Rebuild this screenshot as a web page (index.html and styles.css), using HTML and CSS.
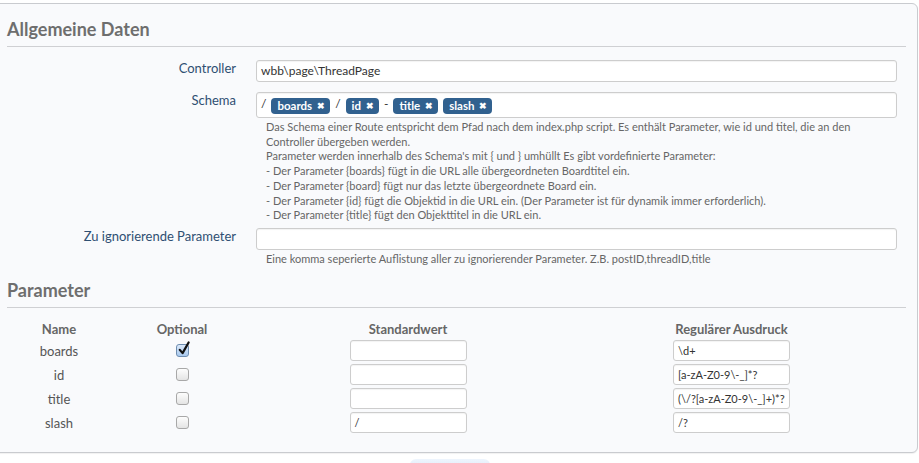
FILE: index.html
```html
<!DOCTYPE html>
<html lang="de">
<head>
<meta charset="utf-8">
<title>Route</title>
<link rel="stylesheet" href="styles.css">
</head>
<body>
<div class="box">
  <h2 class="section-title">Allgemeine Daten</h2>
  <div class="form-row first">
    <label class="form-label">Controller</label>
    <div class="form-field">
      <div class="input">wbb\page\ThreadPage</div>
    </div>
  </div>
  <div class="form-row">
    <label class="form-label">Schema</label>
    <div class="form-field">
      <div class="input schema">
        <span class="sep">/</span>
        <span class="pill">boards <span class="x">✖</span></span>
        <span class="sep">/</span>
        <span class="pill">id <span class="x">✖</span></span>
        <span class="sep">-</span>
        <span class="pill">title <span class="x">✖</span></span>
        <span class="pill">slash <span class="x">✖</span></span>
      </div>
      <p class="help">Das Schema einer Route entspricht dem Pfad nach dem index.php script. Es enthält Parameter, wie id und titel, die an den Controller übergeben werden.<br>Parameter werden innerhalb des Schema's mit { und } umhüllt Es gibt vordefinierte Parameter:<br>- Der Parameter {boards} fügt in die URL alle übergeordneten Boardtitel ein.<br>- Der Parameter {board} fügt nur das letzte übergeordnete Board ein.<br>- Der Parameter {id} fügt die Objektid in die URL ein. (Der Parameter ist für dynamik immer erforderlich).<br>- Der Parameter {title} fügt den Objekttitel in die URL ein.</p>
    </div>
  </div>
  <div class="form-row after-help">
    <label class="form-label">Zu ignorierende Parameter</label>
    <div class="form-field">
      <div class="input"></div>
      <p class="help tight">Eine komma seperierte Auflistung aller zu ignorierender Parameter. Z.B. postID,threadID,title</p>
    </div>
  </div>

  <h2 class="section-title second">Parameter</h2>
  <div class="params">
    <div class="th">Name</div>
    <div class="th">Optional</div>
    <div class="th">Standardwert</div>
    <div class="th">Regulärer Ausdruck</div>

    <div class="td">boards</div>
    <div class="td"><span class="check checked"><svg viewBox="0 0 14 16" width="13" height="15"><path d="M3 9.5 L6 13 L12.5 1.5" fill="none" stroke="#111" stroke-width="2.4" stroke-linecap="round" stroke-linejoin="round"/></svg></span></div>
    <div class="td"><div class="input small"></div></div>
    <div class="td"><div class="input small">\d+</div></div>

    <div class="td">id</div>
    <div class="td"><span class="check"></span></div>
    <div class="td"><div class="input small"></div></div>
    <div class="td"><div class="input small">[a-zA-Z0-9\-_]*?</div></div>

    <div class="td">title</div>
    <div class="td"><span class="check"></span></div>
    <div class="td"><div class="input small"></div></div>
    <div class="td"><div class="input small">(\/?[a-zA-Z0-9\-_]+)*?</div></div>

    <div class="td">slash</div>
    <div class="td"><span class="check"></span></div>
    <div class="td"><div class="input small">/</div></div>
    <div class="td"><div class="input small">/?</div></div>
  </div>
</div>
<div class="footer"><span class="button"></span></div>
</body>
</html>
```
FILE: styles.css
```css
html, body {
  margin: 0;
  padding: 0;
  background: #ffffff;
}
body {
  font-family: "Lato", "Open Sans", sans-serif;
  font-size: 12px;
  color: #555;
  overflow: hidden;
  height: 463px;
}
.box {
  margin: 3px 1px 0 -10px;
  border: 1px solid #c9cbcf;
  border-radius: 6px;
  background: #f9fafc;
  padding: 0 11px 0 16px;
  height: 450px;
  box-sizing: border-box;
  box-shadow: 0 1px 1px rgba(0,0,0,0.06);
}
.section-title {
  margin: 0;
  padding: 14px 0 6px;
  font-size: 18px;
  font-weight: bold;
  color: #6e6e6e;
  border-bottom: 1px solid #cfd0d3;
  line-height: 22px;
}
.section-title.second {
  margin-top: 12px;
  padding-top: 0;
}
.form-row {
  display: grid;
  grid-template-columns: 229px 1fr;
  column-gap: 20px;
  padding-right: 9px;
  margin-top: 10px;
}
.form-row.first { margin-top: 13px; }
.form-row.after-help { margin-top: 5px; }
.form-label {
  text-align: right;
  color: #2f4f72;
  font-size: 13px;
  line-height: 16px;
}
.input {
  height: 22px;
  box-sizing: border-box;
  background: #fff;
  border: 1px solid #cdcdcd;
  border-radius: 3px;
  padding: 0 4px;
  font-size: 12px;
  line-height: 20px;
  color: #333;
  box-shadow: inset 0 1px 1px rgba(0,0,0,0.05);
  white-space: nowrap;
  overflow: hidden;
}
.input.schema {
  height: 26px;
  display: flex;
  align-items: center;
  gap: 5px;
  padding: 0 4px;
}
.sep {
  color: #333;
  font-size: 12px;
  margin-top: -3px;
}
.pill {
  display: inline-flex;
  align-items: center;
  gap: 5px;
  background: #31618f;
  color: #fff;
  font-weight: bold;
  font-size: 11.5px;
  height: 16px;
  line-height: 16px;
  padding: 0 5px 0 6px;
  border-radius: 4px;
  margin-top: 2px;
}
.pill .x {
  font-size: 9px;
}
.help {
  margin: 2px 0 0;
  padding-left: 10px;
  font-size: 11px;
  line-height: 14.7px;
  color: #666;
}
.help.tight {
  margin-top: 2px;
}
.params {
  display: grid;
  grid-template-columns: 104px 142px 310px 1fr;
  grid-template-rows: 19px repeat(4, 24px);
  padding-right: 6px;
  margin-top: 12px;
  align-items: center;
  justify-items: center;
}
.th {
  font-weight: bold;
  color: #666;
  font-size: 13px;
  line-height: 18px;
}
.td {
  font-size: 13px;
  color: #555;
  line-height: 18px;
}
.input.small {
  width: 117px;
  height: 21px;
  font-size: 11px;
}
.check {
  display: block;
  width: 11px;
  height: 11px;
  border: 1px solid #a8a8a8;
  border-radius: 3px;
  background: linear-gradient(#fdfdfd, #e4e4e4);
  position: relative;
}
.check.checked {
  background: linear-gradient(#dbe9fa, #a9c9ee);
  border-color: #6e8db0;
}
.check svg {
  position: absolute;
  left: 0;
  top: -4px;
}
.footer {
  display: flex;
  justify-content: center;
  padding-right: 19px;
  margin-top: 6px;
}
.button {
  display: block;
  width: 80px;
  height: 12px;
  border-radius: 6px 6px 0 0;
  background: linear-gradient(#eef5fd, #dbe8f7);
}
```
